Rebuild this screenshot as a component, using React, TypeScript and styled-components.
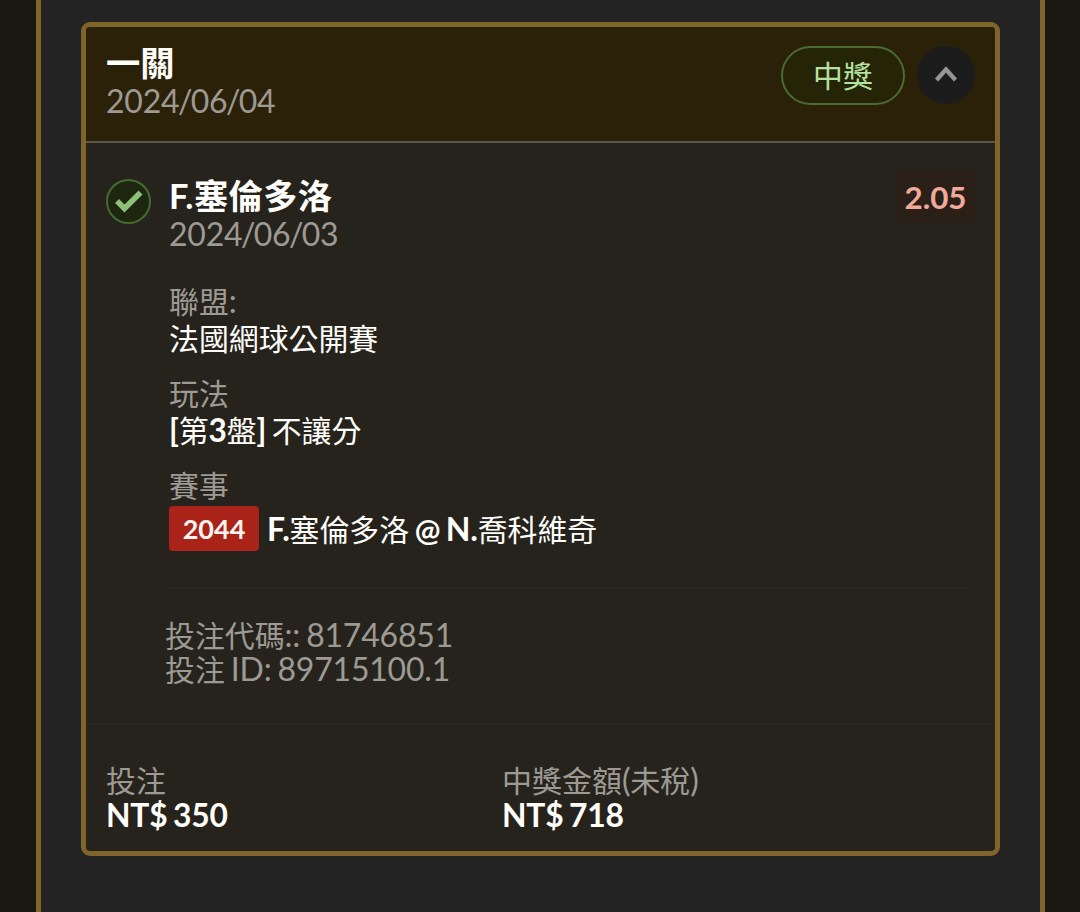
import styled, { createGlobalStyle } from "styled-components";

const GlobalStyle = createGlobalStyle`
  * {
    box-sizing: border-box;
  }
  body {
    margin: 0;
    background: #1b1811;
    font-family: Lato, "Noto Sans CJK TC", sans-serif;
    overflow: hidden;
  }
`;
const Page = styled.main`
  display: flex;
  height: 912px;
  padding: 0 35px 0 36px;
`;
const Frame = styled.section`
  flex: 1;
  padding: 22px 40px 0;
  background: #232323;
  border: solid #80652b;
  border-width: 0 5px;
`;
const Card = styled.article`
  height: 834.4px;
  border: 5px solid #80652b;
  border-radius: 9px;
  background: #26231d;
  overflow: hidden;
`;
const Header = styled.header`
  display: flex;
  align-items: flex-start;
  justify-content: space-between;
  height: 116px;
  padding: 17px 20px 0 20px;
  background: #2b2108;
  border-bottom: 2px solid #5f574a;
`;
const Line = styled.p<{ $size?: number; $height?: number; $weight?: number }>`
  margin: 0;
  height: ${({ $height = 37 }) => $height}px;
  line-height: ${({ $height = 37 }) => $height}px;
  font-size: ${({ $size = 32 }) => $size}px;
  font-weight: ${({ $weight = 400 }) => $weight};
  letter-spacing: -0.2px;
  word-spacing: -2px;
  color: #fffefa;
  white-space: pre;
`;
const Muted = styled(Line)`
  color: #9d9a94;
`;
const Han = styled.span<{ $size?: number; $weight?: number }>`
  display: inline-block;
  font-family: "Noto Sans CJK TC", sans-serif;
  font-size: ${({ $size = 29.9 }) => $size}px;
  font-weight: ${({ $weight = 400 }) => $weight};
  line-height: 1;
  letter-spacing: 0;
`;
const Name = styled(Han)`
  letter-spacing: 0.3px;
  margin-left: 0.8px;
`;
const Slash = styled.span`
  margin: 0 -1.5px;
`;
const At = styled.span`
  font-size: 30.5px;
`;
const Actions = styled.div`
  display: flex;
  gap: 12px;
  padding-top: 2px;
`;
const Status = styled.span`
  display: flex;
  align-items: center;
  justify-content: center;
  width: 124px;
  height: 59px;
  padding-bottom: 1px;
  border: 2px solid #4a6c30;
  border-radius: 30px;
  background: #252407;
  color: #b5e2a0;
`;
const Toggle = styled.button`
  display: flex;
  align-items: center;
  justify-content: center;
  width: 58px;
  height: 58px;
  padding: 0;
  border: 0;
  border-radius: 50%;
  background: #1c1c1d;
`;
const Leg = styled.div`
  display: flex;
  align-items: flex-start;
  height: 582px;
  padding: 28px 20px 0;
  border-bottom: 2px solid #282620;
`;
const Result = styled.svg`
  flex: none;
  margin-top: 8px;
`;
const Details = styled.div`
  flex: 1;
  margin-left: 18px;
  padding-top: 6px;
`;
const Heading = styled.div`
  display: flex;
  justify-content: space-between;
  height: 105px;
`;
const Odds = styled.span`
  width: 79px;
  height: 52px;
  margin-top: -6px;
  background: #2b2018;
  color: #f0aa9c;
  font-size: 31.3px;
  font-weight: 700;
  line-height: 53px;
  text-align: center;
`;
const Field = styled.div`
  height: 92px;
`;
const Match = styled.div`
  display: flex;
  align-items: center;
  height: 46px;
  gap: 8px;
  margin-top: 2px;
`;
const Code = styled.span`
  width: 90px;
  height: 45px;
  border-radius: 4px;
  background: #a92319;
  color: #fff4ee;
  font-size: 27px;
  font-weight: 700;
  line-height: 45px;
  text-align: center;
`;
const Ids = styled.div`
  margin: 36px 4px 0 0;
  padding-top: 29px;
  border-top: 2px solid #292722;
`;
const IdLines = styled.div`
  margin-left: -4px;
`;
const Totals = styled.footer`
  display: grid;
  grid-template-columns: 396px 1fr;
  padding: 37px 20px 0;
`;

function Day({ value }: { value: string }) {
  const [year, month, day] = value.split("/");
  return (
    <Muted $height={39}>
      {year}<Slash>/</Slash>{month}<Slash>/</Slash>{day}
    </Muted>
  );
}

function App() {
  return (
    <Page>
      <GlobalStyle />
      <Frame>
        <Card>
          <Header>
            <div>
              <Line $height={37}>
                <Han $size={34.3} $weight={700}>一關</Han>
              </Line>
              <Day value="2024/06/04" />
            </div>
            <Actions>
              <Status>
                <Han>中獎</Han>
              </Status>
              <Toggle aria-label="收合">
                <svg width="58" height="58" viewBox="0 0 58 58" fill="none">
                  <path d="M19.5 34 L29 23.5 L38.5 34" stroke="#969696" strokeWidth="4.2" />
                </svg>
              </Toggle>
            </Actions>
          </Header>
          <Leg>
            <Result width="45" height="45" viewBox="0 0 45 45" fill="none">
              <circle cx="22.5" cy="22.5" r="21.5" fill="#1e2610" stroke="#436b32" strokeWidth="2" />
              <path d="M11 22 L18.5 29.5 L34.5 13.5" stroke="#8dc078" strokeWidth="5.6" />
            </Result>
            <Details>
              <Heading>
                <div>
                  <Line $size={34.3} $weight={700}>
                    F.<Name $size={34.3} $weight={700}>塞倫多洛</Name>
                  </Line>
                  <Day value="2024/06/03" />
                </div>
                <Odds>2.05</Odds>
              </Heading>
              <Field>
                <Muted><Han>聯盟</Han>:</Muted>
                <Line><Han>法國網球公開賽</Han></Line>
              </Field>
              <Field>
                <Muted><Han>玩法</Han></Muted>
                <Line $size={31.5} $height={39} $weight={700}>
                  [<Han>第</Han>3<Han>盤</Han>] <Han>不讓分</Han>
                </Line>
              </Field>
              <Muted><Han>賽事</Han></Muted>
              <Match>
                <Code>2044</Code>
                <Line $size={32} $height={39} $weight={700}>
                  F.<Han>塞倫多洛</Han> <At>@</At> N.<Han>喬科維奇</Han>
                </Line>
              </Match>
              <Ids>
                <IdLines>
                  <Muted $height={34}><Han>投注代碼</Han>:: 81746851</Muted>
                  <Muted $height={34}><Han>投注</Han> ID: 89715100.1</Muted>
                </IdLines>
              </Ids>
            </Details>
          </Leg>
          <Totals>
            <div>
              <Muted $height={35}><Han>投注</Han></Muted>
              <Line $size={31.8} $height={37} $weight={700}>NT$ 350</Line>
            </div>
            <div>
              <Muted $height={35}><Han $size={30}>中獎金額</Han>(<Han $size={30}>未稅</Han>)</Muted>
              <Line $size={31.8} $height={37} $weight={700}>NT$ 718</Line>
            </div>
          </Totals>
        </Card>
      </Frame>
    </Page>
  );
}

export default App;
